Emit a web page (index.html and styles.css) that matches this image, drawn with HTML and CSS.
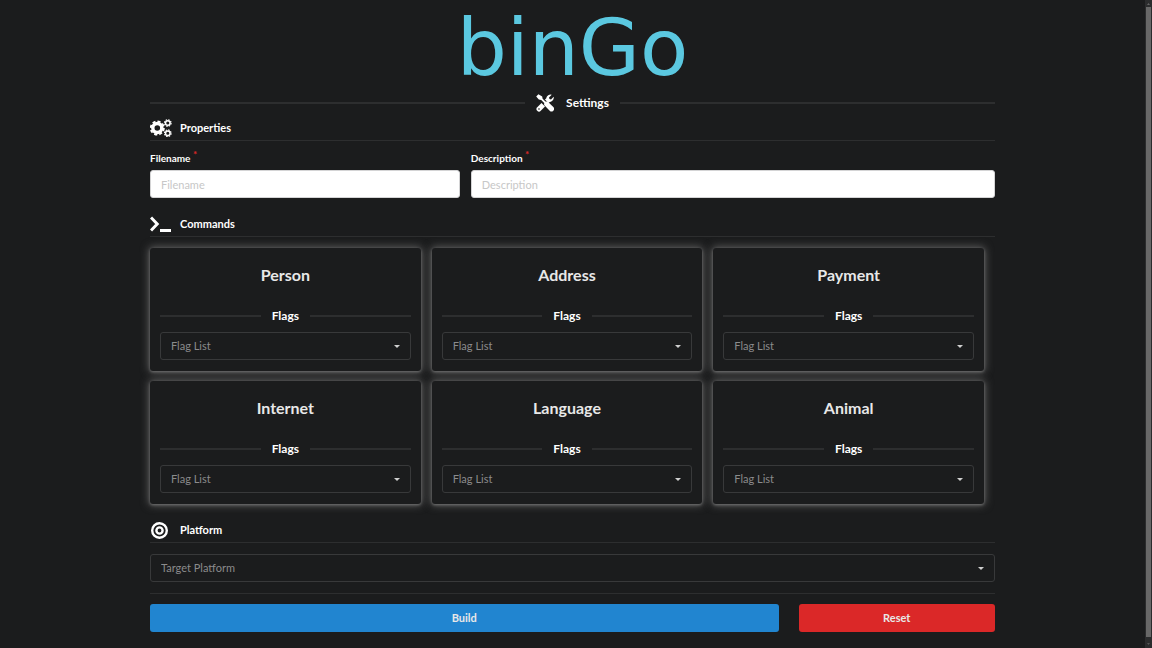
FILE: index.html
```html
<!DOCTYPE html>
<html lang="en">
<head>
<meta charset="utf-8">
<meta name="viewport" content="width=device-width, initial-scale=1">
<title>binGo</title>
<link rel="stylesheet" href="styles.css">
</head>
<body>
<svg class="sprites" aria-hidden="true">
  <symbol id="caret" viewBox="0 0 6 3"><path d="M0 0h6L3 3z"/></symbol>
</svg>
<div class="window">
  <main class="page">
    <h1 class="logo">binGo</h1>

    <form class="form">
      <h2 class="divider divider-main">
        <span class="divider-label">
          <svg class="divider-icon" viewBox="0 0 18 18" aria-hidden="true">
            <path class="stroke-thick" d="M11 7 3 15"/>
            <path d="M10.2 4.2A4.6 4.6 0 0 1 15.7.7L13 3.4l.5 1.5 1.5.5 2.7-2.7a4.6 4.6 0 0 1-6.2 5.1z"/>
            <path class="knock" d="M4 4l11 11"/>
            <path d="M.2 2.400 2.400.3 6.200 2.500l.4 2.300 2.800 2.800 2.200-.1 5.700 5.600a2.500 2.500 0 0 1-3.600 3.600L8.100 11l.1-2-3-3-2.400-.4z"/>
            <circle class="dot" cx="3" cy="15" r=".8"/>
          </svg>
          Settings
        </span>
      </h2>

      <h3 class="heading">
        <svg class="heading-icon" viewBox="0 0 22 18" aria-hidden="true">
          <circle class="ring" cx="7.300" cy="9" r="4.500"/>
          <circle class="teeth" cx="7.300" cy="9" r="6.600"/>
          <circle class="ring-small" cx="17.800" cy="4" r="2.300"/>
          <circle class="teeth-small" cx="17.800" cy="4" r="3.300"/>
          <circle class="ring-small" cx="17.800" cy="14.200" r="2.300"/>
          <circle class="teeth-small" cx="17.800" cy="14.200" r="3.300"/>
        </svg>
        Properties
      </h3>
      <div class="fields">
        <div class="field">
          <label for="filename">Filename <span class="required">*</span></label>
          <input id="filename" type="text" placeholder="Filename">
        </div>
        <div class="field">
          <label for="description">Description <span class="required">*</span></label>
          <input id="description" type="text" placeholder="Description">
        </div>
      </div>

      <h3 class="heading">
        <svg class="heading-icon" viewBox="0 0 22 18" aria-hidden="true">
          <path class="prompt" d="M1 2.500 7.200 9 1 15.500"/>
          <path class="prompt" d="M10 15.500h11"/>
        </svg>
        Commands
      </h3>
      <div class="cards">
        <section class="card">
          <h4 class="card-title">Person</h4>
          <p class="divider"><span class="divider-label">Flags</span></p>
          <div class="dropdown"><select aria-label="Person flags"><option>Flag List</option></select><svg class="caret" aria-hidden="true"><use href="#caret"/></svg></div>
        </section>
        <section class="card">
          <h4 class="card-title">Address</h4>
          <p class="divider"><span class="divider-label">Flags</span></p>
          <div class="dropdown"><select aria-label="Address flags"><option>Flag List</option></select><svg class="caret" aria-hidden="true"><use href="#caret"/></svg></div>
        </section>
        <section class="card">
          <h4 class="card-title">Payment</h4>
          <p class="divider"><span class="divider-label">Flags</span></p>
          <div class="dropdown"><select aria-label="Payment flags"><option>Flag List</option></select><svg class="caret" aria-hidden="true"><use href="#caret"/></svg></div>
        </section>
        <section class="card">
          <h4 class="card-title">Internet</h4>
          <p class="divider"><span class="divider-label">Flags</span></p>
          <div class="dropdown"><select aria-label="Internet flags"><option>Flag List</option></select><svg class="caret" aria-hidden="true"><use href="#caret"/></svg></div>
        </section>
        <section class="card">
          <h4 class="card-title">Language</h4>
          <p class="divider"><span class="divider-label">Flags</span></p>
          <div class="dropdown"><select aria-label="Language flags"><option>Flag List</option></select><svg class="caret" aria-hidden="true"><use href="#caret"/></svg></div>
        </section>
        <section class="card">
          <h4 class="card-title">Animal</h4>
          <p class="divider"><span class="divider-label">Flags</span></p>
          <div class="dropdown"><select aria-label="Animal flags"><option>Flag List</option></select><svg class="caret" aria-hidden="true"><use href="#caret"/></svg></div>
        </section>
      </div>

      <h3 class="heading">
        <svg class="heading-icon" viewBox="0 0 22 18" aria-hidden="true">
          <circle class="target" cx="9.500" cy="9.500" r="7.300"/>
          <circle class="target" cx="9.500" cy="9.500" r="3.100"/>
        </svg>
        Platform
      </h3>
      <div class="dropdown"><select aria-label="Target platform"><option>Target Platform</option></select><svg class="caret" aria-hidden="true"><use href="#caret"/></svg></div>

      <div class="actions">
        <button class="button build" type="submit">Build</button>
        <button class="button reset" type="reset">Reset</button>
      </div>
    </form>
  </main>
  <div class="scrollbar" aria-hidden="true">
    <svg class="arrow" viewBox="0 0 6 3"><path d="M0 3h6L3 0z"/></svg>
    <div class="thumb"></div>
    <svg class="arrow" viewBox="0 0 6 3"><use href="#caret"/></svg>
  </div>
</div>
</body>
</html>
```

FILE: styles.css
```css
* {
  box-sizing: border-box;
}

body {
  margin: 0;
  background: #1b1c1d;
  color: #fff;
  font: 11px/16px Lato, sans-serif;
}

h1, h2, h3, h4, p {
  margin: 0;
}

.sprites {
  position: absolute;
  width: 0;
  height: 0;
}

.window {
  display: flex;
  min-height: 100vh;
}

.page {
  flex: 1;
  padding: 12px 24px 16px;
}

.logo {
  height: 72px;
  color: #5bc8e0;
  font: 79px/72px "DejaVu Sans", sans-serif;
  text-align: center;
}

.form {
  max-width: 845px;
  margin: 0 auto;
}

.divider {
  display: flex;
  align-items: center;
  gap: 11px;
  font-size: 12px;
  font-weight: 700;
  line-height: 16px;
}

.divider::before,
.divider::after {
  content: "";
  flex: 1;
  height: 2px;
  background: #2d2e2f;
}

.divider-main {
  padding: 10px 0 7px;
}

.divider-label {
  display: flex;
  align-items: center;
  gap: 12px;
}

.divider-icon {
  width: 18px;
  height: 18px;
  fill: #fff;
}

.stroke-thick {
  stroke: #fff;
  stroke-width: 5;
  stroke-linecap: round;
}

.knock {
  stroke: #1b1c1d;
  stroke-width: 5;
}

.dot {
  fill: #1b1c1d;
}

.heading {
  display: flex;
  align-items: center;
  gap: 8px;
  height: 22px;
  padding-bottom: 3px;
  border-bottom: 1px solid #2d2e2f;
  font-size: 11px;
  font-weight: 700;
}

.heading-icon {
  width: 22px;
  height: 18px;
  fill: none;
  stroke: #fff;
}

.ring {
  stroke-width: 3.400;
}

.teeth {
  stroke-width: 1.800;
  stroke-dasharray: 3.100 2.084;
}

.ring-small {
  stroke-width: 1.500;
}

.teeth-small {
  stroke-width: 1.200;
  stroke-dasharray: 1.500 1.092;
}

.prompt {
  stroke-width: 3;
}

.target {
  stroke-width: 2.400;
}

.fields {
  display: grid;
  grid-template-columns: 13fr 22fr;
  gap: 11px;
  padding: 9px 0 17px;
}

.field {
  display: grid;
  gap: 4px;
}

.field label {
  font-size: 10px;
  font-weight: 700;
}

.required {
  color: #db2828;
  line-height: 8px;
  vertical-align: top;
}

.field input {
  width: 100%;
  height: 28px;
  padding: 0 10px;
  border: 1px solid #d4d4d5;
  border-radius: 3px;
  background: #fff;
  color: #1b1c1d;
  font: inherit;
}

.field input::placeholder {
  color: #c7c7c7;
}

.cards {
  display: grid;
  grid-template-columns: repeat(3, 1fr);
  gap: 10px 11px;
  padding: 11px 11px 17px 0;
}

.card {
  display: grid;
  gap: 8px;
  padding: 17px 10px 11px;
  border-radius: 3px;
  background: #1b1c1d;
  box-shadow: 0 1px 3px 0 #707070, 0 0 8px 1px #606060;
}

.card-title {
  padding-bottom: 15px;
  color: #e8e8e8;
  font-size: 16px;
  font-weight: 700;
  line-height: 20px;
  text-align: center;
}

.card .divider {
  line-height: 16px;
}

.dropdown {
  display: grid;
  align-items: center;
}

.dropdown > * {
  grid-area: 1 / 1;
}

.dropdown select {
  width: 100%;
  height: 28px;
  padding: 0 24px 0 10px;
  border: 1px solid #38393a;
  border-radius: 3px;
  appearance: none;
  background: #1b1c1d;
  color: #8b8b8c;
  font: inherit;
}

.caret {
  justify-self: end;
  width: 6px;
  height: 3px;
  margin-right: 11px;
  fill: #d0d0d0;
  pointer-events: none;
}

.heading + .dropdown {
  padding: 11px 0;
}

.actions {
  display: grid;
  grid-template-columns: 16fr 5fr;
  gap: 20px;
  padding-top: 10px;
  border-top: 1px solid #2d2e2f;
}

.button {
  height: 28px;
  border: 0;
  border-radius: 3px;
  color: #e8e8e8;
  font: 700 11px/16px Lato, sans-serif;
}

.build {
  background: #2185d0;
}

.reset {
  background: #db2828;
}

.scrollbar {
  display: flex;
  flex-direction: column;
  align-items: center;
  gap: 2px;
  width: 7px;
  padding: 3px 1px;
  background: #2b2c2d;
}

.arrow {
  width: 3px;
  height: 2px;
  fill: #777;
}

.thumb {
  flex: 1;
  width: 5px;
  margin-bottom: 4px;
  background: #686868;
}
```
